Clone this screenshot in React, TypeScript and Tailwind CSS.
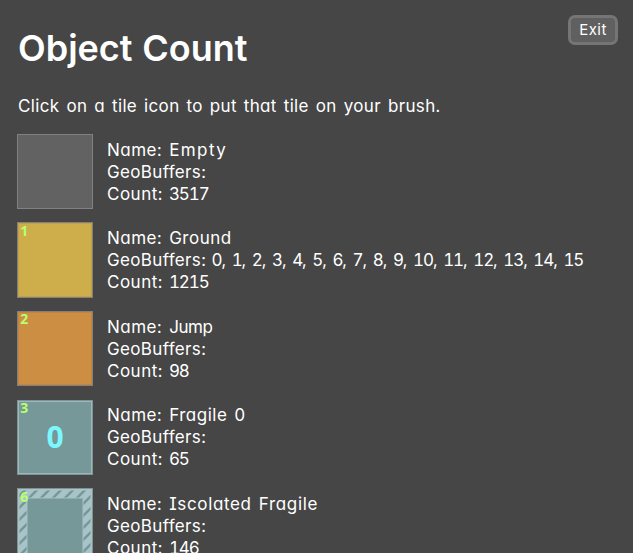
import React from "react";

type Tile = {
  name: string;
  nameTracking: string;
  buffers: string;
  count: string;
  box: string;
  textOffset: string;
  badge?: string;
  kind: "empty" | "ground" | "jump" | "fragile" | "isolated";
};

const tiles: Tile[] = [
  { name: "Empty", nameTracking: "tracking-[1.4px]", buffers: "", count: "3517", box: "mt-[16px] h-[75px]", textOffset: "mt-[5px]", kind: "empty" },
  { name: "Ground", nameTracking: "tracking-[0.5px]", buffers: "0, 1, 2, 3, 4, 5, 6, 7, 8, 9, 10, 11, 12, 13, 14, 15", count: "1215", box: "mt-[13px] h-[76px]", textOffset: "mt-[5px]", badge: "1", kind: "ground" },
  { name: "Jump", nameTracking: "tracking-[-0.4px]", buffers: "", count: "98", box: "mt-[13px] h-[75px]", textOffset: "mt-[5px]", badge: "2", kind: "jump" },
  { name: "Fragile 0", nameTracking: "tracking-[0.5px]", buffers: "", count: "65", box: "mt-[14px] h-[75px]", textOffset: "mt-[4px]", badge: "3", kind: "fragile" },
  { name: "Iscolated Fragile", nameTracking: "tracking-[0.65px]", buffers: "", count: "146", box: "mt-[13px] h-[76px]", textOffset: "mt-[5px]", badge: "6", kind: "isolated" },
];

const fills: Record<Tile["kind"], string> = {
  empty: "border-[#818181] bg-[#626262]",
  ground: "border-[#858078] bg-[#cdae4b]",
  jump: "border-[#858078] bg-[#cc8e43]",
  fragile: "border-[#829192] bg-[#769898]",
  isolated: "border-[#829192] bg-[#a9c4c8]",
};

function TileArt({ kind, badge }: { kind: Tile["kind"]; badge?: string }) {
  return (
    <svg viewBox="0 0 74 74" preserveAspectRatio="none" className="block h-full w-full">
      {kind === "ground" && <rect x="0.5" y="0.5" width="73" height="73" fill="none" stroke="#c3a04a" />}
      {kind === "jump" && <rect x="0.5" y="0.5" width="73" height="73" fill="none" stroke="#c38443" />}
      {kind === "fragile" && (
        <>
          <rect x="0.5" y="0.5" width="73" height="73" fill="none" stroke="#9abac0" />
          <text x="37.2" y="48" textAnchor="middle" fontSize="30" fontWeight="700" fill="#7cf7ff" fontFamily="'Noto Sans', sans-serif">0</text>
        </>
      )}
      {kind === "isolated" && (
        <>
          <defs>
            <pattern id="stripes" width="12" height="12" patternUnits="userSpaceOnUse">
              <path d="M-2 10L10 -2M6 14L14 6" stroke="#769898" strokeWidth="2.6" />
            </pattern>
          </defs>
          <rect x="1.5" y="1.5" width="71" height="71" fill="url(#stripes)" />
          <rect x="8.5" y="8.5" width="57" height="57" fill="#a9c4c8" />
          <rect x="9.5" y="9.5" width="55" height="55" fill="#769898" stroke="#8caeb3" />
        </>
      )}
      {badge && (
        <text x="2.3" y="12.5" fontSize="14" fontWeight="700" fill="#b8ff6e" fontFamily="'Noto Sans', sans-serif">{badge}</text>
      )}
    </svg>
  );
}

export default function App() {
  return (
    <main className="h-[553px] w-[633px] overflow-hidden bg-[#464646] pl-[17px] font-['Inter',sans-serif] text-[17px] leading-[22px] text-white [font-feature-settings:'cv11','cv08','tnum']">
      <header className="flex h-[95px] items-start justify-between pr-[15px] pt-[15px]">
        <h1 className="mt-[10px] pl-px text-[36px] leading-[46px] font-semibold whitespace-nowrap">Object Count</h1>
        <button className="h-[30px] w-[50px] rounded-[7px] border-[3px] border-[#757575] bg-[#606060] text-[15px] leading-[22px] tracking-[0.5px]">Exit</button>
      </header>
      <p className="h-[23px] pl-px whitespace-nowrap tracking-[0.36px] [word-spacing:2px]">Click on a tile icon to put that tile on your brush.</p>
      {tiles.map((tile) => (
        <section key={tile.name} className={`flex ${tile.box}`}>
          <button className={`h-full w-[76px] shrink-0 border ${fills[tile.kind]}`}>
            <TileArt kind={tile.kind} badge={tile.badge} />
          </button>
          <div className={`pl-[14px] whitespace-nowrap tracking-[0.5px] [word-spacing:2px] ${tile.textOffset}`}>
            <div>Name: <span className={tile.nameTracking}>{tile.name}</span></div>
            <div className="tracking-[0.35px] [word-spacing:0.5px]">GeoBuffers: <span className="tracking-[-1.1px] [word-spacing:3.3px]">{tile.buffers}</span></div>
            <div className="[word-spacing:1px]">Count: <span className="tracking-[-1.1px]">{tile.count}</span></div>
          </div>
        </section>
      ))}
    </main>
  );
}
